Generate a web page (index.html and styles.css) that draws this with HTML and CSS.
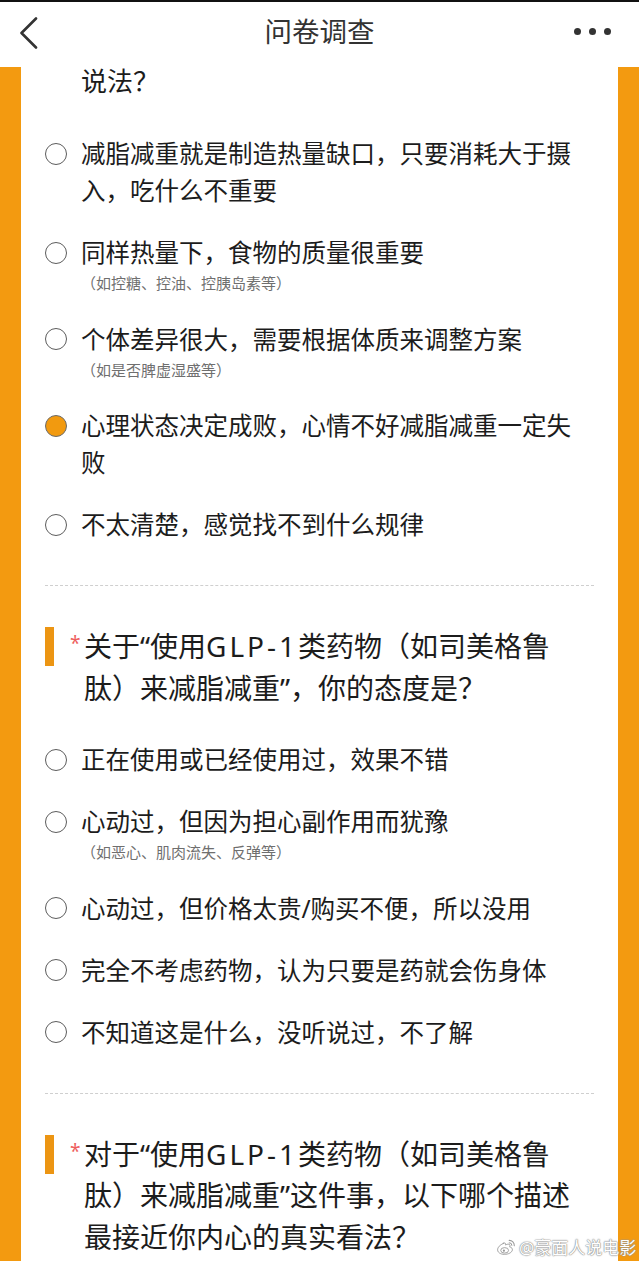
FILE: index.html
```html
<!DOCTYPE html>
<html lang="zh-CN">
<head>
  <meta charset="UTF-8">
  <meta name="viewport" content="width=device-width, initial-scale=1.0">
  <title>问卷调查</title>
  <link rel="stylesheet" href="styles.css">
</head>
<body>
  <header class="topbar">
    <svg class="back" width="18" height="32" viewBox="0 0 18 32">
      <polyline points="16,1.5 1.5,16 16,30.5" fill="none" stroke="#333" stroke-width="2.6" stroke-linecap="round" stroke-linejoin="round"/>
    </svg>
    <h1>问卷调查</h1>
    <div class="more"><span></span><span></span><span></span></div>
  </header>

  <main class="page">
    <div class="card">

      <section class="question first">
        <p class="q-tail">说法？</p>
        <ul class="options">
          <li class="option"><span class="radio"></span><div class="label">减脂减重就是制造热量缺口，只要消耗大于摄入，吃什么不重要</div></li>
          <li class="option"><span class="radio"></span><div class="label">同样热量下，食物的质量很重要<span class="note">（如控糖、控油、控胰岛素等）</span></div></li>
          <li class="option"><span class="radio"></span><div class="label">个体差异很大，需要根据体质来调整方案<span class="note">（如是否脾虚湿盛等）</span></div></li>
          <li class="option"><span class="radio checked"></span><div class="label">心理状态决定成败，心情不好减脂减重一定失败</div></li>
          <li class="option"><span class="radio"></span><div class="label">不太清楚，感觉找不到什么规律</div></li>
        </ul>
      </section>

      <section class="question">
        <div class="q-title">
          <span class="q-bar"></span>
          <span class="q-star">*</span>
          <div class="q-text">关于“使用<span class="glp">GLP-1</span>类药物（如司美格鲁肽）来减脂减重”，你的态度是？</div>
        </div>
        <ul class="options">
          <li class="option"><span class="radio"></span><div class="label">正在使用或已经使用过，效果不错</div></li>
          <li class="option"><span class="radio"></span><div class="label">心动过，但因为担心副作用而犹豫<span class="note">（如恶心、肌肉流失、反弹等）</span></div></li>
          <li class="option"><span class="radio"></span><div class="label">心动过，但价格太贵/购买不便，所以没用</div></li>
          <li class="option"><span class="radio"></span><div class="label">完全不考虑药物，认为只要是药就会伤身体</div></li>
          <li class="option"><span class="radio"></span><div class="label">不知道这是什么，没听说过，不了解</div></li>
        </ul>
      </section>

      <section class="question last">
        <div class="q-title">
          <span class="q-bar"></span>
          <span class="q-star">*</span>
          <div class="q-text">对于“使用<span class="glp">GLP-1</span>类药物（如司美格鲁肽）来减脂减重”这件事，以下哪个描述最接近你内心的真实看法？</div>
        </div>
      </section>

    </div>
  </main>

  <div class="watermark">
    <svg width="20" height="18" viewBox="0 0 22 19">
      <path d="M8.5 5.5C4.5 7 1.5 10 1.8 13c.4 3.3 4.5 5 9 4.5 4.6-.5 7.6-3 7.2-5.6-.3-1.8-2-2.2-3-2.4.6-1.4.5-2.6-.6-3-1.3-.5-3 .3-4 .8.3-1 .2-2-.6-2.2-.7-.2-1.7.1-2.3.4z" fill="#fff" stroke="#999" stroke-width="1"/>
      <ellipse cx="9.5" cy="13.2" rx="4.3" ry="3" fill="#fff" stroke="#999" stroke-width="1"/>
      <circle cx="8.7" cy="13.5" r="1.2" fill="#999"/>
      <path d="M14.5 2.2a5.5 5.5 0 0 1 5.6 5.8" fill="none" stroke="#999" stroke-width="1.2" stroke-linecap="round"/>
      <path d="M14.6 4.8a2.8 2.8 0 0 1 2.9 2.9" fill="none" stroke="#999" stroke-width="1.1" stroke-linecap="round"/>
    </svg>
    <span>@豪面人说电影</span>
  </div>
</body>
</html>
```

FILE: styles.css
```css
body {
  margin: 0;
  background: #f39a10;
  color: #1c1c1c;
  font-family: "Noto Sans", "Noto Sans CJK SC", sans-serif;
  height: 1261px;
  overflow: hidden;
  position: relative;
}
.topbar {
  height: 65px;
  border-top: 2px solid #111;
  background: #fff;
  display: grid;
  grid-template-columns: 1fr auto 1fr;
  align-items: center;
  padding: 0 20px;
}
.back {
  display: block;
  margin-top: -4px;
}
.topbar h1 {
  margin: 0;
  font-size: 27.5px;
  font-weight: normal;
  color: #333;
  margin-top: -9px;
}
.more {
  justify-self: end;
  display: flex;
  gap: 8px;
  margin: -7px 8px 0 0;
}
.more span {
  width: 7px;
  height: 7px;
  border-radius: 50%;
  background: #333;
}
.page {
  padding: 0 21px 0 21px;
}
.card {
  background: #fff;
  padding: 0 24px;
  min-height: 1200px;
}
.question {
  padding: 40px 0 42px;
  border-bottom: 1px dashed #cfcfcf;
}
.question.first {
  padding-top: 0;
  padding-bottom: 42px;
}
.question.last {
  border-bottom: none;
}
.q-tail {
  margin: 0 0 40px;
  padding-left: 36px;
  font-size: 26px;
  line-height: 28px;
}
.q-title {
  display: flex;
  align-items: flex-start;
  margin-bottom: 32px;
}
.q-bar {
  flex: none;
  width: 9px;
  height: 39px;
  margin: 1px 16px 0 0;
  background: #ec9513;
}
.q-star {
  flex: none;
  width: 14px;
  color: #ee5e5e;
  font-size: 19px;
  line-height: 34px;
}
.q-text {
  flex: 1;
  font-size: 28px;
  line-height: 41.5px;
  padding-right: 15px;
}
.glp {
  letter-spacing: 3px;
}
.options {
  list-style: none;
  margin: 0;
  padding: 0;
  display: flex;
  flex-direction: column;
  gap: 25px;
}
.option {
  display: flex;
  align-items: flex-start;
}
.radio {
  flex: none;
  box-sizing: border-box;
  width: 22px;
  height: 22px;
  margin: 7.5px 14px 0 0;
  border: 1.6px solid #5c5c5c;
  border-radius: 50%;
  background: #fff;
}
.radio.checked {
  background: #f29a0f;
  border-color: #6b6b6b;
}
.label {
  flex: 1;
  font-size: 24.5px;
  line-height: 37px;
}
.note {
  display: block;
  font-size: 15px;
  line-height: 24.5px;
  color: #6f6f6f;
}
.watermark {
  position: absolute;
  left: 496px;
  top: 1234px;
  display: flex;
  align-items: center;
  gap: 3px;
  white-space: nowrap;
  color: #fff;
  font-size: 17px;
  text-shadow: 0 0 1px #888, 0 0 1px #888, 0 0 2px #aaa;
}
```
